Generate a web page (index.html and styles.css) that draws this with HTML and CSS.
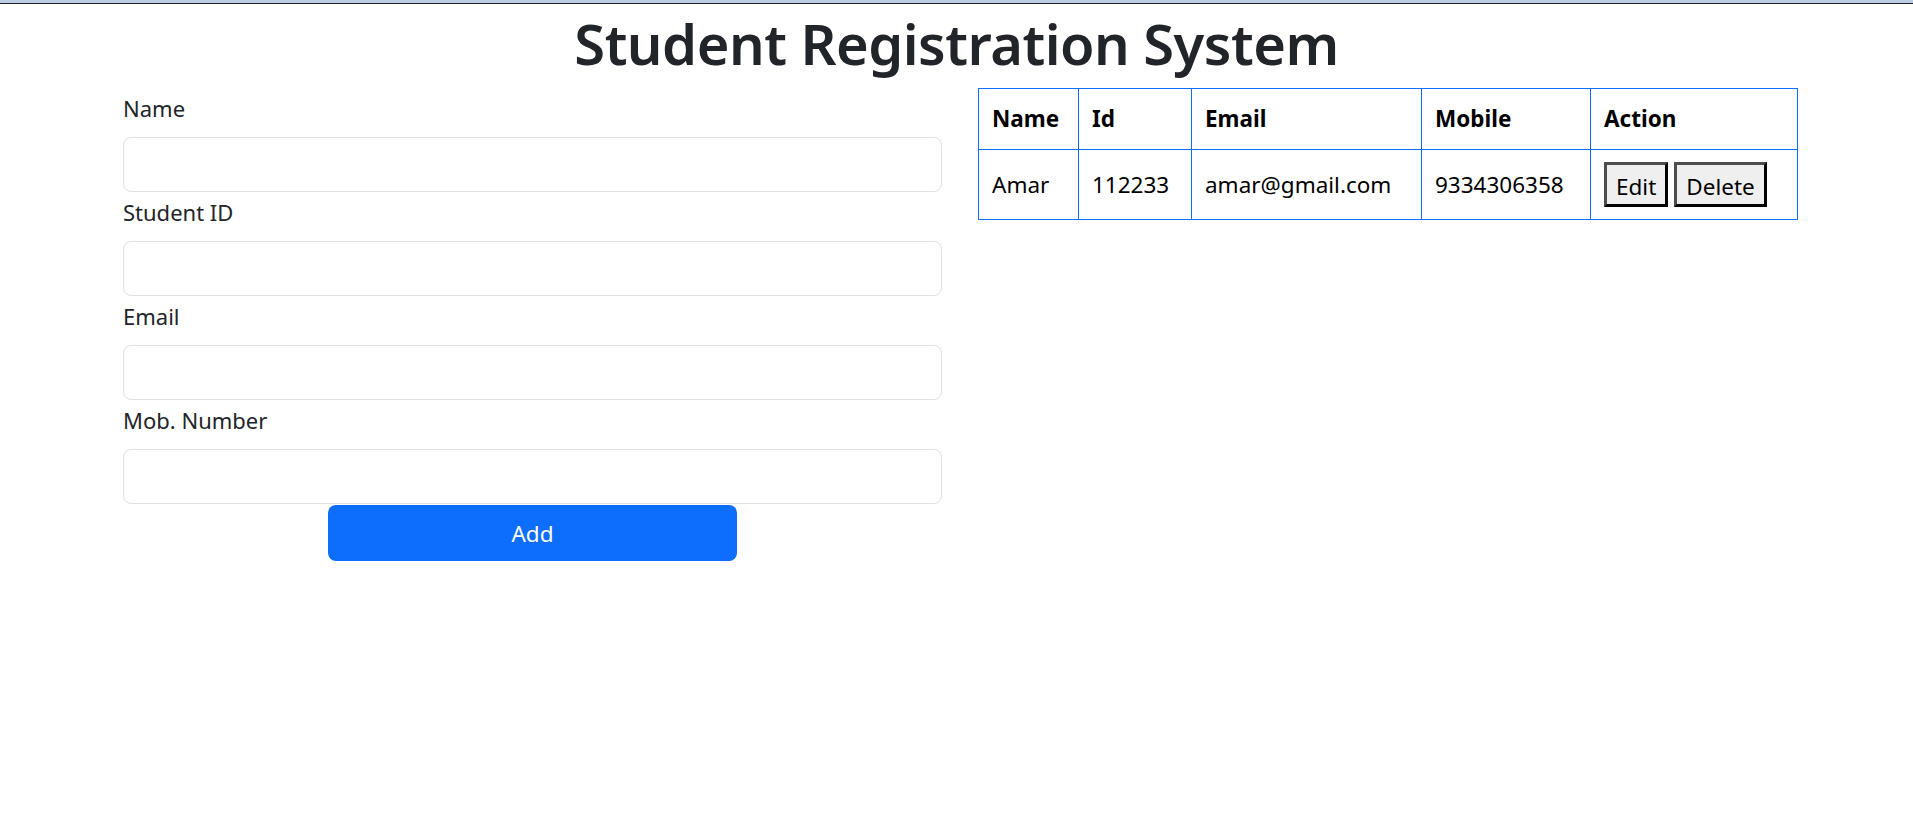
FILE: index.html
```html
<!DOCTYPE html>
<html lang="en">
<head>
<meta charset="utf-8">
<title>Student Registration System</title>
<link rel="stylesheet" href="styles.css">
</head>
<body>
<div class="topbar"></div>
<h1 class="title">Student Registration System</h1>
<div class="layout">
  <form class="form">
    <div class="field">
      <label class="label" for="name">Name</label>
      <input class="input" id="name" type="text">
    </div>
    <div class="field">
      <label class="label" for="sid">Student ID</label>
      <input class="input" id="sid" type="text">
    </div>
    <div class="field">
      <label class="label" for="email">Email</label>
      <input class="input" id="email" type="text">
    </div>
    <div class="field">
      <label class="label" for="mob">Mob. Number</label>
      <input class="input" id="mob" type="text">
    </div>
    <button class="btn-add" type="button">Add</button>
  </form>
  <div class="table-wrap">
    <table class="students">
      <colgroup>
        <col class="c-name">
        <col class="c-id">
        <col class="c-email">
        <col class="c-mobile">
        <col class="c-action">
      </colgroup>
      <thead>
        <tr><th>Name</th><th>Id</th><th>Email</th><th>Mobile</th><th>Action</th></tr>
      </thead>
      <tbody>
        <tr>
          <td>Amar</td>
          <td>112233</td>
          <td>amar@gmail.com</td>
          <td>9334306358</td>
          <td><div class="actions"><button class="btn-row" type="button">Edit</button><button class="btn-row" type="button">Delete</button></div></td>
        </tr>
      </tbody>
    </table>
  </div>
</div>
</body>
</html>
```
FILE: styles.css
```css
* { box-sizing: border-box; }
html, body { margin: 0; padding: 0; background: #fff; }
body {
  font-family: "Noto Sans", "Open Sans", sans-serif;
  color: #212529;
}
.topbar {
  height: 4px;
  background: #bccde3;
  border-bottom: 1px solid #1d2430;
}
.title {
  margin: 3px 0 9px;
  text-align: center;
  font-size: 56px;
  line-height: 72px;
  font-weight: 600;
  letter-spacing: -0.5px;
}
.layout {
  display: grid;
  grid-template-columns: 819px 819px;
  column-gap: 36px;
  padding-left: 123px;
  align-items: start;
}
.form { margin: 0; }
.label {
  display: block;
  font-size: 22px;
  line-height: 30px;
  margin: 5px 0 14px;
}
.input {
  display: block;
  width: 100%;
  height: 55px;
  border: 1px solid #dee2e6;
  border-radius: 8px;
  background: #fff;
  font: inherit;
}
.btn-add {
  display: block;
  width: 50%;
  height: 56px;
  margin: 1px auto 0;
  border: none;
  border-radius: 8px;
  background: #0d6efd;
  color: #fff;
  font-family: inherit;
  font-size: 22.5px;
}
.students {
  border-collapse: collapse;
  table-layout: fixed;
  width: 819px;
  color: #000;
  font-size: 22.5px;
}
.c-name { width: 100px; }
.c-id { width: 113px; }
.c-email { width: 230px; }
.c-mobile { width: 169px; }
.c-action { width: 207px; }
.students th, .students td {
  border: 1px solid #0d6efd;
  padding: 12px 13px;
  text-align: left;
  vertical-align: middle;
}
.students th {
  font-weight: 700;
  line-height: 36px;
}
.students td { line-height: 30px; }
.actions {
  display: flex;
  gap: 6px;
}
.btn-row {
  height: 45px;
  padding: 4px 9px 0;
  border: 3px solid;
  border-color: #4d4d4d #000 #000 #4d4d4d;
  background: #efefef;
  color: #000;
  font-family: inherit;
  font-size: 22.5px;
}
```
